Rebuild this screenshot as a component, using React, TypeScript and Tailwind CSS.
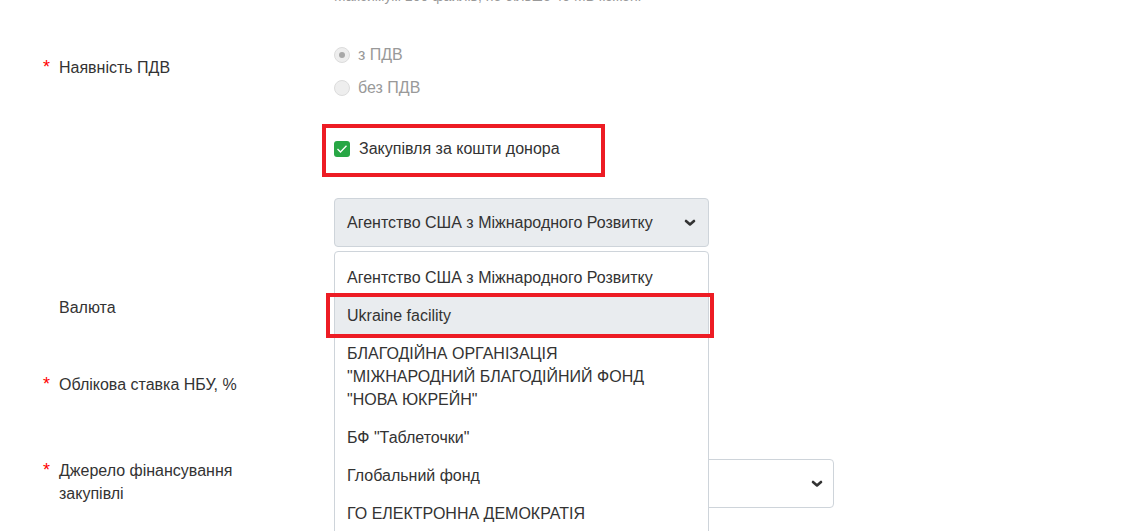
import React from 'react';

const donors = [
  'Агентство США з Міжнародного Розвитку',
  'Ukraine facility',
  'БЛАГОДІЙНА ОРГАНІЗАЦІЯ "МІЖНАРОДНИЙ БЛАГОДІЙНИЙ ФОНД "НОВА ЮКРЕЙН"',
  'БФ "Таблеточки"',
  'Глобальний фонд',
  'ГО ЕЛЕКТРОННА ДЕМОКРАТІЯ',
  'Данська рада у справах біженців',
];

function Chevron() {
  return (
    <svg width="12" height="8" viewBox="0 0 12 8" className="shrink-0">
      <path d="M2 2 L6 5.5 L10 2" fill="none" stroke="#333" strokeWidth="2.6" strokeLinecap="round" strokeLinejoin="round" />
    </svg>
  );
}

function Label({ text, required }: { text: React.ReactNode; required?: boolean }) {
  return (
    <div className="w-[334px] shrink-0 pl-[43px] flex leading-[23px]">
      <span className="w-[16px] shrink-0 text-[#ff0000] text-[18px]">{required ? '*' : ''}</span>
      <span className="w-[200px]">{text}</span>
    </div>
  );
}

function Radio({ checked, label }: { checked?: boolean; label: string }) {
  return (
    <div className="flex items-center h-[23px] text-[#999]">
      <span className="w-[16px] h-[16px] rounded-full border border-[#dcdcdc] bg-[#eeeeee] flex items-center justify-center">
        {checked && <span className="w-[6px] h-[6px] rounded-full bg-[#a8a8a8]" />}
      </span>
      <span className="ml-[8px]">{label}</span>
    </div>
  );
}

export default function App() {
  return (
    <div
      className="relative w-[1133px] h-[531px] overflow-hidden bg-white text-[16px] text-[#333]"
      style={{ fontFamily: '"Liberation Sans", Arial, sans-serif' }}
    >
      <div className="pl-[334px] -mt-[14px] h-[20px] leading-5 text-[14px] text-[#999]">
        Максимум 100 файлів, не більше 49 МБ кожен.
      </div>

      {/* ПДВ */}
      <div className="flex mt-[37px]">
        <div className="pt-[13px]">
          <Label text="Наявність ПДВ" required />
        </div>
        <div className="flex flex-col gap-[10px]">
          <Radio checked label="з ПДВ" />
          <Radio label="без ПДВ" />
        </div>
      </div>

      {/* donor checkbox */}
      <div className="flex mt-[38px]">
        <div className="w-[334px] shrink-0" />
        <div className="flex items-center h-[24px]">
          <span className="w-[16px] h-[16px] rounded-[3px] bg-[#28a745] flex items-center justify-center">
            <svg width="12" height="10" viewBox="0 0 12 10">
              <path d="M1.5 5 L4.5 8 L10.5 1.8" fill="none" stroke="#fff" strokeWidth="1.3" />
            </svg>
          </span>
          <span className="ml-[9px]">Закупівля за кошти донора</span>
        </div>
      </div>

      {/* donor select */}
      <div className="flex mt-[37px]">
        <div className="w-[334px] shrink-0" />
        <div className="w-[375px] h-[49px] rounded-[4px] border border-[#ced4da] bg-[#e9ecef] flex items-center justify-between pl-[12px] pr-[12px]">
          <span>{donors[0]}</span>
          <Chevron />
        </div>
      </div>

      {/* Валюта */}
      <div className="flex items-center mt-[36px]">
        <Label text="Валюта" />
        <div className="w-[375px] h-[49px] rounded-[4px] border border-[#ced4da] bg-white" />
      </div>

      {/* Облікова ставка */}
      <div className="flex items-center mt-[28px]">
        <Label text="Облікова ставка НБУ, %" required />
        <div className="w-[375px] h-[49px] rounded-[4px] border border-[#ced4da] bg-white" />
      </div>

      {/* Джерело */}
      <div className="flex items-start mt-[50px]">
        <Label text="Джерело фінансування закупівлі" required />
        <div className="w-[500px] h-[49px] rounded-[4px] border border-[#ced4da] bg-white flex items-center justify-end pr-[10px]">
          <Chevron />
        </div>
      </div>

      {/* open dropdown list */}
      <div className="absolute left-[334px] top-[251px] w-[375px] h-[320px] rounded-[4px] border border-[#ced4da] bg-white pt-[6px]">
        {donors.map((d, i) => (
          <div
            key={d}
            className={`px-[12px] py-[7.5px] leading-[23px] ${i === 1 ? 'bg-[#e9ecef]' : ''}`}
          >
            <div className="w-[320px]">{d}</div>
          </div>
        ))}
      </div>

      {/* red annotation frames */}
      <div className="absolute left-[322px] top-[124px] w-[283px] h-[53px] border-[4px] border-[#ed1c24]" />
      <div className="absolute left-[326px] top-[293px] w-[388px] h-[45px] border-[4px] border-[#ed1c24]" />
    </div>
  );
}
